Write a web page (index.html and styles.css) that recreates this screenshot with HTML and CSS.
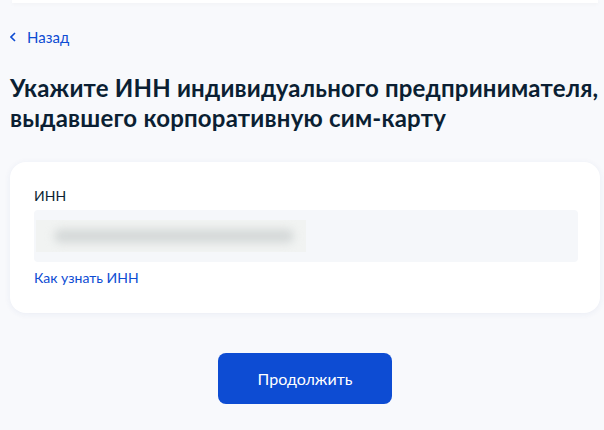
FILE: index.html
```html
<!DOCTYPE html>
<html lang="ru">
<head>
  <meta charset="UTF-8">
  <title>Укажите ИНН</title>
  <link rel="stylesheet" href="styles.css">
</head>
<body>

  <div class="pagina">
    <div class="tira"></div>

    <a class="atras" href="#">
      <svg width="6" height="10" viewBox="0 0 6 10">
        <path d="M5 1 L1 5 L5 9" fill="none" stroke="#0d4cd3" stroke-width="1.6"/>
      </svg>
      <span>Назад</span>
    </a>

    <h1 class="titulo">Укажите ИНН индивидуального предпринимателя, выдавшего корпоративную сим-карту</h1>

    <div class="tarjeta">
      <label class="etiqueta">ИНН</label>
      <div class="campo">
        <div class="oculto"><div class="mancha"></div></div>
      </div>
      <a class="enlace" href="#">Как узнать ИНН</a>
    </div>

    <div class="acciones">
      <button class="boton">Продолжить</button>
    </div>
  </div>

</body>
</html>
```

FILE: styles.css
```css
body {
  margin: 0;
  background-color: #f8f9fc;
  font-family: Lato, "Noto Sans", sans-serif;
  color: #0b1f33;
}

.pagina {
  padding: 0 4px 0 10px;
}

.tira {
  height: 3px;
  margin: 0 2px;
  background-color: #ffffff;
  box-shadow: 0 1px 4px rgba(0, 0, 0, 0.04);
}

.atras {
  display: flex;
  align-items: center;
  gap: 11px;
  margin-top: 24px;
  color: #0d4cd3;
  text-decoration: none;
  font-size: 15px;
  line-height: 20px;
}

.titulo {
  margin: 26px 0 0;
  font-size: 24px;
  line-height: 30px;
  font-weight: 700;
  letter-spacing: 0.2px;
}

.tarjeta {
  margin-top: 29px;
  background-color: #ffffff;
  border-radius: 16px;
  box-shadow: 0 1px 6px rgba(40, 70, 140, 0.07);
  padding: 24px 22px 25px 24px;
}

.etiqueta {
  display: block;
  font-size: 14px;
  line-height: 20px;
}

.campo {
  margin-top: 4px;
  height: 52px;
  background-color: #f5f7fa;
  border-radius: 4px;
  display: flex;
  align-items: center;
  padding-left: 2px;
}

.oculto {
  width: 270px;
  height: 32px;
  background-color: #f1f3f2;
  display: flex;
  align-items: center;
  overflow: hidden;
}

.mancha {
  width: 240px;
  height: 14px;
  margin-left: 18px;
  background-color: #d5d9d9;
  border-radius: 7px;
  filter: blur(4px);
}

.enlace {
  display: inline-block;
  margin-top: 6px;
  font-size: 14px;
  line-height: 20px;
  color: #0d4cd3;
  text-decoration: none;
}

.acciones {
  display: flex;
  justify-content: center;
  margin-top: 40px;
}

.boton {
  width: 174px;
  height: 51px;
  border: none;
  border-radius: 8px;
  background-color: #0d4cd3;
  color: #ffffff;
  font-family: Lato, "Noto Sans", sans-serif;
  font-size: 16px;
}
```
